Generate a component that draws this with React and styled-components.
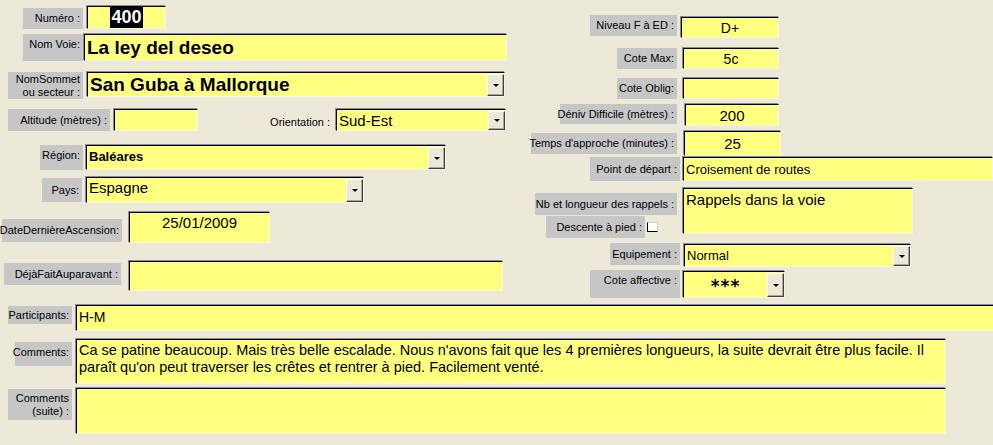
import React from 'react';
import styled, { createGlobalStyle } from 'styled-components';

const GlobalStyle = createGlobalStyle`
  html, body {
    margin: 0;
    padding: 0;
    background: #ece9d8;
    overflow: hidden;
  }
  body {
    font-family: "Liberation Sans", Arial, sans-serif;
  }
`;

const Form = styled.div`
  width: 993px;
  height: 445px;
  background: #ece9d8;
  overflow: hidden;
  display: flex;
  flex-direction: column;
`;

const Top = styled.div`
  display: flex;
  height: 298px;
  flex-shrink: 0;
`;

const Column = styled.div`
  display: flex;
  flex-direction: column;
  width: ${p => p.$w}px;
  flex-shrink: 0;
`;

const Row = styled.div`
  display: flex;
  align-items: flex-start;
  height: ${p => p.$h}px;
  margin-top: ${p => p.$mt || 0}px;
  flex-shrink: 0;
`;

const Label = styled.div`
  box-sizing: border-box;
  width: ${p => p.$w}px;
  height: ${p => p.$h}px;
  margin-top: ${p => p.$dy || 0}px;
  margin-left: ${p => p.$ml || 0}px;
  background: ${p => (p.$plain ? 'transparent' : '#c6c6c6')};
  color: #000;
  font-size: 11px;
  line-height: 13px;
  text-align: right;
  padding: ${p => (p.$top ? '4px 3px 0 0' : '0 3px 0 0')};
  display: flex;
  flex-direction: column;
  justify-content: ${p => (p.$top ? 'flex-start' : 'center')};
  align-items: flex-end;
  white-space: nowrap;
  flex-shrink: 0;
`;

const Box = styled.div`
  box-sizing: border-box;
  width: ${p => p.$w}px;
  height: ${p => p.$h}px;
  margin-top: ${p => p.$dy || 0}px;
  margin-left: ${p => p.$ml || 0}px;
  background: #ffff80;
  border-top: 1px solid #000;
  border-left: 1px solid #000;
  border-right: 1px solid #f6f4ea;
  border-bottom: 1px solid #f6f4ea;
  box-shadow: -1px -1px 0 #8c8c8c;
  display: flex;
  align-items: stretch;
  overflow: hidden;
  flex-shrink: 0;
  color: #000;
`;

const Value = styled.div`
  flex: 1;
  min-width: 0;
  display: flex;
  align-items: ${p => (p.$top ? 'flex-start' : 'center')};
  justify-content: ${p => (p.$center ? 'center' : 'flex-start')};
  padding: ${p => p.$pad || '0 2px'};
  font-size: ${p => p.$fs || 13}px;
  font-weight: ${p => (p.$bold ? 700 : 400)};
  line-height: ${p => p.$lh || 'normal'};
  white-space: ${p => (p.$wrap ? 'normal' : 'nowrap')};
  overflow: hidden;
`;

const Selected = styled.span`
  background: #000;
  color: #fff;
  font-size: 18px;
  font-weight: 700;
  line-height: 21px;
  padding: 0 1px;
`;

const Stars = styled.span`
  font-family: "DejaVu Sans", sans-serif;
  font-size: 17px;
  font-weight: 700;
  letter-spacing: 1px;
  line-height: 17px;
  margin-top: 6px;
`;

const DropButton = styled.div`
  box-sizing: border-box;
  width: 17px;
  flex-shrink: 0;
  margin: 1px 0 0 0;
  background: #ece9d8;
  border-top: 1px solid #fff;
  border-left: 1px solid #fff;
  border-right: 1px solid #404040;
  border-bottom: 1px solid #404040;
  box-shadow: inset -1px -1px 0 #a8a59a;
  display: flex;
  align-items: center;
  justify-content: center;

  &::after {
    content: '';
    width: 0;
    height: 0;
    border-left: 3px solid transparent;
    border-right: 3px solid transparent;
    border-top: 3px solid #000;
  }
`;

const LabelStack = styled.div`
  display: flex;
  flex-direction: column;
  align-items: flex-start;
  width: ${p => p.$w}px;
  margin-left: ${p => p.$ml}px;
  flex-shrink: 0;
`;

const InlineRow = styled.div`
  display: flex;
  align-items: flex-start;
  margin-top: ${p => p.$mt || 0}px;
  margin-left: ${p => p.$ml || 0}px;
`;

const CheckBox = styled.span`
  box-sizing: border-box;
  width: 11px;
  height: 10px;
  margin: 6px 0 0 2px;
  background: #fff;
  border-left: 1px solid #000;
  border-bottom: 1px solid #000;
  border-top: 1px solid #d4d0c8;
  border-right: 1px solid #d4d0c8;
`;

const Bottom = styled.div`
  display: flex;
  flex-direction: column;
`;

const Combo = ({ children, ...props }) => (
  <Box {...props}>
    {children}
    <DropButton />
  </Box>
);

export default function App() {
  return (
    <>
      <GlobalStyle />
      <Form>
        <Top>
          <Column $w={520}>
            <Row $mt={6} $h={23}>
              <Label $ml={23} $w={60} $h={21} $dy={2}>Numéro :</Label>
              <Box $ml={4} $w={79} $h={23}>
                <Value $center>
                  <Selected>400</Selected>
                </Value>
              </Box>
            </Row>
            <Row $mt={5} $h={27}>
              <Label $ml={23} $w={60} $h={27} $top>Nom Voie:</Label>
              <Box $ml={1} $w={423} $h={27}>
                <Value $fs={19} $bold>La ley del deseo</Value>
              </Box>
            </Row>
            <Row $mt={11} $h={27}>
              <Label $ml={8} $w={75} $h={27}>
                <span>NomSommet</span>
                <span>ou secteur :</span>
              </Label>
              <Combo $ml={4} $w={418} $h={25}>
                <Value $fs={19} $bold>San Guba à Mallorque</Value>
              </Combo>
            </Row>
            <Row $mt={10} $h={22}>
              <Label $ml={8} $w={102} $h={22}>Altitude (mètres) :</Label>
              <Box $ml={4} $w={84} $h={22} />
              <Label $plain $ml={62} $w={73} $h={22} $dy={2}>Orientation :</Label>
              <Combo $ml={3} $w={170} $h={22}>
                <Value $fs={15}>Sud-Est</Value>
              </Combo>
            </Row>
            <Row $mt={14} $h={25}>
              <Label $ml={40} $w={43} $h={25} $top>Région:</Label>
              <Combo $ml={3} $w={360} $h={25}>
                <Value $fs={13} $bold $top $pad="3px 2px 0">Baléares</Value>
              </Combo>
            </Row>
            <Row $mt={7} $h={26}>
              <Label $ml={42} $w={40} $h={24} $dy={1}>Pays:</Label>
              <Combo $ml={4} $w={278} $h={26}>
                <Value $fs={15} $top $pad="1px 2px 0">Espagne</Value>
              </Combo>
            </Row>
            <Row $mt={9} $h={31}>
              <Label $ml={2} $w={120} $h={23} $dy={7}>DateDernièreAscension:</Label>
              <Box $ml={7} $w={141} $h={31}>
                <Value $fs={15} $center $top $pad="1px 2px 0">25/01/2009</Value>
              </Box>
            </Row>
            <Row $mt={18} $h={30}>
              <Label $ml={4} $w={117} $h={22} $dy={2}>DéjàFaitAuparavant :</Label>
              <Box $ml={8} $w={374} $h={30} />
            </Row>
          </Column>

          <Column $w={473}>
            <Row $mt={15} $h={23}>
              <Label $ml={70} $w={87} $h={21}>Niveau F à ED :</Label>
              <Box $ml={4} $w={98} $h={21} $dy={2}>
                <Value $fs={14} $center>D+</Value>
              </Box>
            </Row>
            <Row $mt={10} $h={21}>
              <Label $ml={97} $w={60} $h={21}>Cote Max:</Label>
              <Box $ml={6} $w={96} $h={21}>
                <Value $fs={14} $center>5c</Value>
              </Box>
            </Row>
            <Row $mt={9} $h={21}>
              <Label $ml={97} $w={60} $h={21}>Cote Oblig:</Label>
              <Box $ml={6} $w={96} $h={21} />
            </Row>
            <Row $mt={5} $h={22}>
              <Label $ml={40} $w={117} $h={20}>Déniv Difficile (mètres) :</Label>
              <Box $ml={8} $w={94} $h={22}>
                <Value $fs={15} $center>200</Value>
              </Box>
            </Row>
            <Row $mt={5} $h={25}>
              <Label $ml={11} $w={146} $h={21} $dy={2}>Temps d'approche (minutes) :</Label>
              <Box $ml={7} $w={97} $h={25}>
                <Value $fs={15} $center>25</Value>
              </Box>
            </Row>
            <Row $mt={1} $h={24}>
              <Label $ml={70} $w={90} $h={24}>Point de départ :</Label>
              <Box $ml={3} $w={310} $h={24}>
                <Value $fs={13}>Croisement de routes</Value>
              </Box>
            </Row>
            <Row $mt={7} $h={50}>
              <LabelStack $ml={15} $w={145}>
                <Label $w={142} $h={22} $dy={5}>Nb et longueur des rappels :</Label>
                <InlineRow $mt={1} $ml={11}>
                  <Label $w={99} $h={22}>Descente à pied :</Label>
                  <CheckBox />
                </InlineRow>
              </LabelStack>
              <Box $ml={3} $w={230} $h={46}>
                <Value $fs={15} $top $pad="2px 2px 0">Rappels dans la voie</Value>
              </Box>
            </Row>
            <Row $mt={5} $h={24}>
              <Label $ml={90} $w={70} $h={22}>Equipement :</Label>
              <Combo $ml={4} $w={227} $h={23} $dy={1}>
                <Value $fs={13}>Normal</Value>
              </Combo>
            </Row>
            <Row $mt={3} $h={28}>
              <Label $ml={70} $w={90} $h={28} $top>Cote affective :</Label>
              <Combo $ml={3} $w={102} $h={27} $dy={1}>
                <Value $center $top>
                  <Stars>***</Stars>
                </Value>
              </Combo>
            </Row>
          </Column>
        </Top>

        <Bottom>
          <Row $mt={7} $h={26}>
            <Label $ml={8} $w={64} $h={18} $dy={1}>Participants:</Label>
            <Box $ml={4} $w={930} $h={26}>
              <Value $fs={14} $top $pad="3px 2px 0">H-M</Value>
            </Box>
          </Row>
          <Row $mt={8} $h={45}>
            <Label $ml={15} $w={57} $h={24} $dy={3} $top>Comments:</Label>
            <Box $ml={4} $w={870} $h={45}>
              <Value $fs={14.5} $lh="17px" $top $wrap $pad="2px 4px 0 2px">
                Ca se patine beaucoup. Mais très belle escalade. Nous n'avons fait que les 4 premières longueurs, la suite devrait être plus facile. Il paraît qu'on peut traverser les crêtes et rentrer à pied. Facilement venté.
              </Value>
            </Box>
          </Row>
          <Row $mt={4} $h={46}>
            <Label $ml={8} $w={64} $h={31} $dy={1}>
              <span>Comments</span>
              <span>(suite) :</span>
            </Label>
            <Box $ml={4} $w={870} $h={46} />
          </Row>
        </Bottom>
      </Form>
    </>
  );
}
